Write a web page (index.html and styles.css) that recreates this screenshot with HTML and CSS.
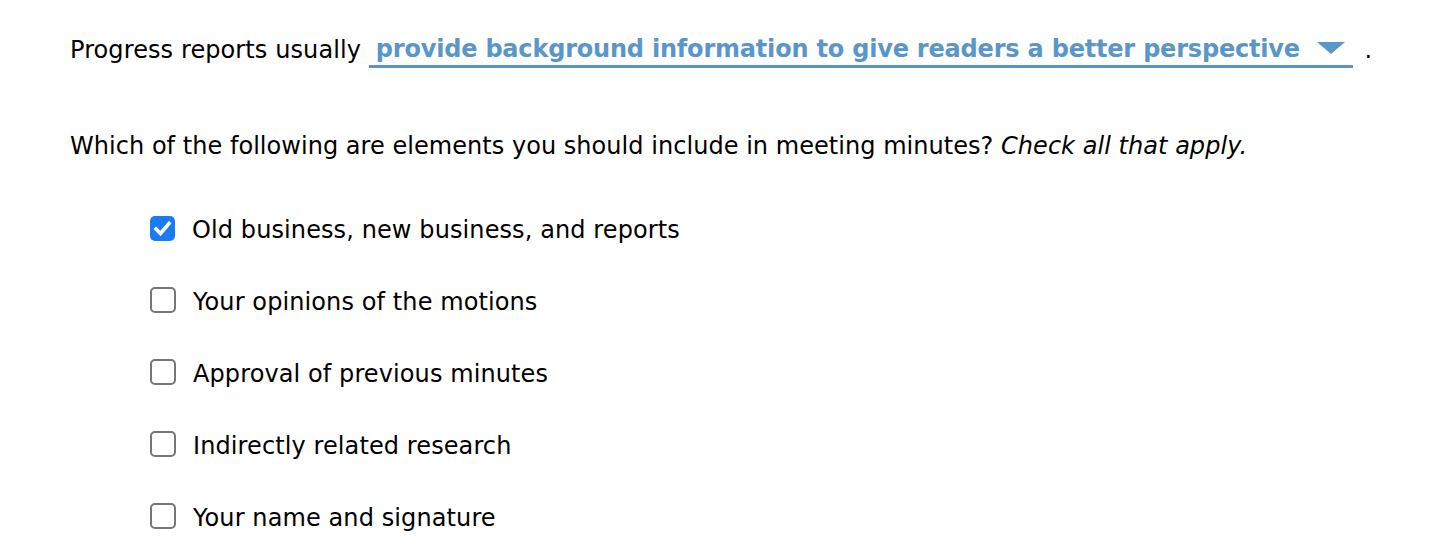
FILE: index.html
```html
<!DOCTYPE html>
<html>
<head>
<meta charset="utf-8">
<link rel="stylesheet" href="styles.css">
</head>
<body>
<div class="page">
  <p class="line">Progress reports usually <span class="dropdown"><span class="dd-text">provide background information to give readers a better perspective</span><svg class="dd-arrow" width="28" height="12" viewBox="0 0 28 12"><polygon points="0,0 28,0 14,12" fill="#5a96c8"/></svg></span> <span class="dot">.</span></p>
  <p class="question">Which of the following are elements you should include in meeting minutes? <em>Check all that apply.</em></p>
  <ul class="options">
    <li class="option"><span class="box checked"><svg width="25" height="25" viewBox="0 0 25 25"><path d="M6 13 L10.5 17.5 L19 7.5" fill="none" stroke="#fff" stroke-width="3.6" stroke-linecap="square"/></svg></span><span>Old business, new business, and reports</span></li>
    <li class="option"><span class="box"></span><span>Your opinions of the motions</span></li>
    <li class="option"><span class="box"></span><span>Approval of previous minutes</span></li>
    <li class="option"><span class="box"></span><span>Indirectly related research</span></li>
    <li class="option"><span class="box"></span><span>Your name and signature</span></li>
  </ul>
</div>
</body>
</html>
```
FILE: styles.css
```css
html, body {
  margin: 0;
  padding: 0;
  background: #fff;
}
body {
  font-family: "DejaVu Sans", Verdana, sans-serif;
  font-size: 24px;
  letter-spacing: 0.1px;
  color: #000;
}
.page {
  padding: 32px 0 0 70px;
}
.line {
  margin: 0;
  line-height: 36px;
  white-space: nowrap;
}
.dropdown {
  display: inline-flex;
  align-items: center;
  justify-content: space-between;
  box-sizing: border-box;
  width: 984px;
  height: 36px;
  padding: 0 8px 0 7px;
  border-bottom: 3px solid #5a96c8;
  vertical-align: top;
  color: #5a96c8;
  font-weight: bold;
  letter-spacing: -0.2px;
}
.dd-text {
  line-height: 36px;
}
.dd-arrow {
  display: block;
  margin-top: -2px;
}
.dot {
  margin-left: 4px;
}
.question {
  margin: 60px 0 0 0;
  line-height: 36px;
  letter-spacing: 0.04px;
}
.question em {
  font-style: oblique;
}
.options {
  list-style: none;
  margin: 48px 0 0 80px;
  padding: 0;
}
.option {
  display: flex;
  align-items: center;
  height: 36px;
  margin-bottom: 36px;
  gap: 17px;
}
.box {
  box-sizing: border-box;
  width: 26px;
  height: 26px;
  margin-bottom: 4px;
  border: 2px solid #767676;
  border-radius: 5px;
  flex: none;
}
.box.checked {
  border: none;
  width: 25px;
  height: 25px;
  background: #1a7cf4;
  border-radius: 5px;
}
.box svg {
  display: block;
}
```
